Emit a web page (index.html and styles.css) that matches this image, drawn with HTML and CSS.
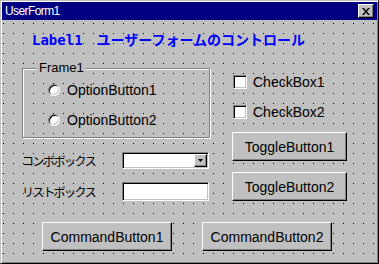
FILE: index.html
```html
<!DOCTYPE html>
<html lang="ja">
<head>
    <meta charset="UTF-8">
    <meta name="viewport" content="width=device-width, initial-scale=1.0">
    <title>UserForm1</title>
    <link rel="stylesheet" href="styles.css">
</head>
<body>

    <!-- Form window -->
    <div class="window">
        <div class="titlebar">
            <span class="title">UserForm1</span>
            <div class="close-btn">
                <svg width="8" height="7" viewBox="0 0 8 7">
                    <path d="M0 0h2l2 2.5 2-2.5h2l-3 3.5 3 3.5h-2l-2-2.5-2 2.5h-2l3-3.5z" fill="#000"/>
                </svg>
            </div>
        </div>

        <div class="form">
            <div class="caption">Label1　ユーザーフォームのコントロール</div>

            <div class="main">
                <!-- Left column -->
                <div class="left">
                    <div class="frame">
                        <span class="frame-caption">Frame1</span>
                        <div class="option"><span class="radio"></span>OptionButton1</div>
                        <div class="option"><span class="radio"></span>OptionButton2</div>
                    </div>

                    <div class="field-row combo-row">
                        <span class="field-label">コンボボックス</span>
                        <div class="combo">
                            <div class="drop-btn">
                                <svg width="5" height="3" viewBox="0 0 5 3"><path d="M0 0h5l-2.5 3z" fill="#000"/></svg>
                            </div>
                        </div>
                    </div>

                    <div class="field-row list-row">
                        <span class="field-label">リストボックス</span>
                        <div class="listbox"></div>
                    </div>
                </div>

                <!-- Right column -->
                <div class="right">
                    <div class="check"><span class="box"></span>CheckBox1</div>
                    <div class="check"><span class="box"></span>CheckBox2</div>
                    <div class="btn toggle">ToggleButton1</div>
                    <div class="btn toggle">ToggleButton2</div>
                </div>
            </div>

            <!-- Command buttons -->
            <div class="commands">
                <div class="btn command">CommandButton1</div>
                <div class="btn command">CommandButton2</div>
            </div>
        </div>
    </div>

</body>
</html>
```

FILE: styles.css
```css
/* General */
body { margin: 0; padding: 0; font-family: "Liberation Sans", Arial, sans-serif; font-size: 14px; color: #000; }

/* Window */
.window { width: 379px; height: 264px; box-sizing: border-box; background: #c0c0c0;
          border: 1px solid; border-color: #c0c0c0 #000 #000 #c0c0c0;
          box-shadow: inset 1px 1px 0 #fff, inset -1px -1px 0 #808080; padding: 1px; display: flex; flex-direction: column; }

/* Title bar */
.titlebar { height: 18px; background: #000080; color: #fff; display: flex; align-items: center; justify-content: space-between; padding: 0 3px 0 3px; flex-shrink: 0; }
.title { font-size: 12px; letter-spacing: -0.6px; line-height: 14px; }
.close-btn { width: 16px; height: 14px; box-sizing: border-box; background: #c0c0c0; display: flex; align-items: center; justify-content: center;
             border: 1px solid; border-color: #fff #000 #000 #fff; box-shadow: inset -1px -1px 0 #808080; }

/* Form canvas with design grid */
.form { flex: 1; padding: 12px 0 0 20px;
        background-color: #c0c0c0;
        background-image: linear-gradient(90deg, #c0c0c0 9px, transparent 9px), linear-gradient(#c0c0c0 9px, #000 9px);
        background-size: 10px 10px; background-position: 2px 4px; }

.caption { margin-left: 10px; height: 16px; line-height: 16px; color: #0000ff; font-weight: bold;
           font-family: "DejaVu Sans Mono", "Noto Sans CJK JP", monospace; font-size: 14px; }

.main { display: flex; gap: 22px; margin-top: 20px; }

/* Left column */
.left { width: 188px; }
.frame { position: relative; height: 70px; box-sizing: border-box; padding: 13px 0 0 25px;
         border: 1px solid #808080; box-shadow: 1px 1px 0 #fff, inset 1px 1px 0 #fff; }
.frame-caption { position: absolute; top: -9px; left: 14px; padding: 0 2px; background: #c0c0c0; font-size: 13px; line-height: 16px; }
.option { display: flex; align-items: center; gap: 7px; height: 16px; }
.option + .option { margin-top: 14px; }
.radio { width: 12px; height: 12px; box-sizing: border-box; border-radius: 50%; background: #fff;
         border: 1px solid; border-color: #808080 #fff #fff #808080; box-shadow: inset 1px 1px 0 #000, inset -1px -1px 0 #c0c0c0; }

.field-row { display: flex; align-items: center; }
.field-label { width: 100px; font-family: "Noto Sans CJK JP", sans-serif; font-size: 12px; letter-spacing: -1.5px; }
.combo-row { margin-top: 14px; height: 17px; }
.list-row { margin-top: 13px; height: 19px; }
.combo, .listbox { width: 87px; height: 100%; box-sizing: border-box; background: #fff;
                   border: 1px solid; border-color: #808080 #fff #fff #808080; box-shadow: inset 1px 1px 0 #000, inset -1px -1px 0 #c0c0c0; }
.combo { display: flex; justify-content: flex-end; align-items: center; padding-right: 1px; }
.drop-btn { width: 13px; height: 13px; box-sizing: border-box; background: #c0c0c0; display: flex; align-items: center; justify-content: center;
            border: 1px solid; border-color: #fff #000 #000 #fff; box-shadow: inset -1px -1px 0 #808080; }

/* Right column */
.right { width: 115px; padding-top: 6px; }
.check { display: flex; align-items: center; gap: 6px; height: 16px; padding-left: 1px; }
.check + .check { margin-top: 14px; }
.box { width: 14px; height: 14px; box-sizing: border-box; background: #fff;
       border: 1px solid; border-color: #808080 #fff #fff #808080; box-shadow: inset 1px 1px 0 #000, inset -1px -1px 0 #c0c0c0; }

/* Buttons */
.btn { display: flex; align-items: center; justify-content: center; height: 29px; box-sizing: border-box; background: #c0c0c0;
       border: 1px solid; border-color: #fff #000 #000 #fff; box-shadow: inset -1px -1px 0 #808080; }
.toggle { margin-top: 11px; }
.check + .toggle { margin-top: 12px; }
.commands { display: flex; gap: 30px; margin: 21px 0 0 20px; }
.command { width: 130px; }
```
